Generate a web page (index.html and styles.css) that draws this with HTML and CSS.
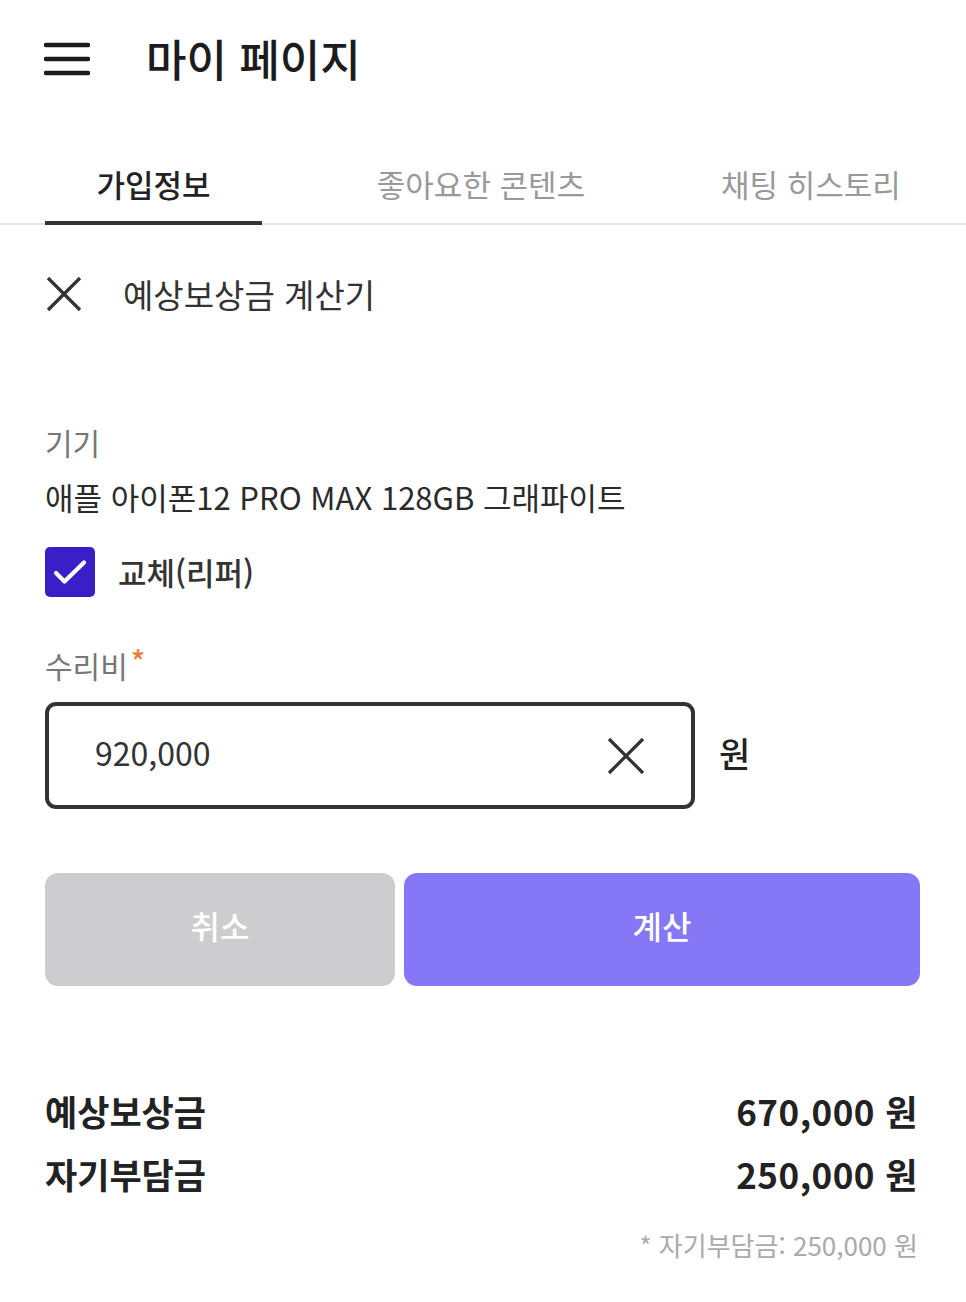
FILE: index.html
```html
<!DOCTYPE html>
<html lang="ko">
<head>
  <meta charset="UTF-8">
  <meta name="viewport" content="width=device-width, initial-scale=1.0">
  <title>마이 페이지</title>
  <link rel="stylesheet" href="styles.css">
</head>
<body>
  <!-- 상단 헤더 -->
  <header class="top-bar">
    <button class="menu-btn" aria-label="메뉴">
      <svg width="46" height="34" viewBox="0 0 46 34">
        <path d="M2 3h42M2 17h42M2 31h42" stroke="#1c1c1e" stroke-width="4.5" stroke-linecap="round" fill="none"/>
      </svg>
    </button>
    <h1 class="page-title">마이 페이지</h1>
  </header>

  <!-- 탭 -->
  <nav class="tabs">
    <a class="tab active" href="#">가입정보</a>
    <a class="tab wide" href="#">좋아요한 콘텐츠</a>
    <a class="tab last" href="#">채팅 히스토리</a>
  </nav>

  <main class="calc">
    <div class="calc-head">
      <button class="close-btn" aria-label="닫기">
        <svg width="38" height="38" viewBox="0 0 38 38">
          <path d="M3 3l32 32M35 3L3 35" stroke="#333" stroke-width="3.2" fill="none"/>
        </svg>
      </button>
      <h2 class="calc-title">예상보상금 계산기</h2>
    </div>

    <div class="field-label">기기</div>
    <div class="device">애플 아이폰12 PRO MAX 128GB 그래파이트</div>

    <label class="check-row">
      <span class="checkbox">
        <svg width="50" height="50" viewBox="0 0 50 50">
          <path d="M11 26l8.5 8.5L39 15.5" stroke="#fff" stroke-width="4.2" stroke-linecap="round" stroke-linejoin="round" fill="none"/>
        </svg>
      </span>
      <span class="check-text">교체(리퍼)</span>
    </label>

    <div class="field-label required">수리비<span class="star">*</span></div>
    <div class="input-row">
      <div class="input-box">
        <span class="input-value">920,000</span>
        <button class="clear-btn" aria-label="지우기">
          <svg width="38" height="38" viewBox="0 0 38 38">
            <path d="M2 2l34 34M36 2L2 36" stroke="#333" stroke-width="3.2" fill="none"/>
          </svg>
        </button>
      </div>
      <span class="unit">원</span>
    </div>

    <div class="actions">
      <button class="btn cancel">취소</button>
      <button class="btn submit">계산</button>
    </div>

    <div class="result">
      <div class="result-row"><span>예상보상금</span><span class="amount">670,000 원</span></div>
      <div class="result-row"><span>자기부담금</span><span class="amount">250,000 원</span></div>
      <p class="note">* 자기부담금: 250,000 원</p>
    </div>
  </main>
</body>
</html>
```

FILE: styles.css
```css
/* ---------- 기본 ---------- */
* { margin: 0; padding: 0; box-sizing: border-box; }
body {
  font-family: "Noto Sans CJK KR", "Noto Sans", sans-serif;
  background: #fff;
  color: #333;
}
button { border: none; background: none; font-family: inherit; cursor: pointer; }

/* ---------- 헤더 ---------- */
.top-bar {
  height: 116px;
  display: flex; align-items: center;
  padding-left: 44px;
}
.menu-btn { display: flex; width: 46px; height: 34px; margin-top: 2px; }
.page-title {
  margin-left: 56px;
  font-size: 44px; font-weight: 500; color: #1c1c1e;
  line-height: 50px;
}

/* ---------- 탭 ---------- */
.tabs {
  display: flex;
  padding: 48px 44px 0 45px;
  border-bottom: 2px solid #e4e4e4;
}
.tab {
  display: block;
  text-align: center; text-decoration: none;
  font-size: 31px; line-height: 40px; color: #999;
  padding-bottom: 17px;
  margin-bottom: -2px;
  border-bottom: 4px solid transparent;
}
.tab.active { width: 217px; color: #222; font-weight: 500; border-bottom-color: #333; }
.tab.wide { flex: 1; }
.tab.last { width: 222px; }

/* ---------- 계산기 ---------- */
.calc { padding: 0 46px 0 45px; }
.calc-head {
  display: flex; align-items: center;
  height: 40px; margin-top: 49px;
}
.close-btn { display: flex; width: 38px; height: 38px; }
.calc-title {
  margin-left: 40px;
  font-size: 33px; font-weight: 400; color: #333; line-height: 40px;
}

.field-label {
  margin-top: 108px;
  font-size: 30px; line-height: 40px; color: #777;
}
.device {
  margin-top: 15px;
  font-size: 31px; line-height: 40px; color: #2b2b2b;
}

.check-row { display: flex; align-items: center; margin-top: 30px; }
.checkbox {
  width: 50px; height: 50px; border-radius: 5px;
  background: #3a1ec8;
  display: flex;
}
.check-text { margin-left: 23px; font-size: 31px; line-height: 40px; color: #333; font-weight: 500; }

.field-label.required { margin-top: 48px; }
.star { color: #e8813b; font-size: 30px; font-weight: 500; position: relative; top: -5px; margin-left: 3px; }

.input-row { display: flex; align-items: center; margin-top: 17px; }
.input-box {
  width: 650px; height: 107px;
  border: 4px solid #333; border-radius: 11px;
  display: flex; align-items: center; justify-content: space-between;
  padding: 0 46px 0 46px;
}
.input-value { font-size: 32px; color: #333; line-height: 40px; margin-top: -8px; }
.clear-btn { display: flex; width: 38px; height: 38px; }
.unit { margin-left: 24px; font-size: 34px; font-weight: 500; color: #222; margin-top: -6px; }

.actions { display: flex; gap: 9px; margin-top: 64px; }
.btn {
  height: 113px; border-radius: 13px;
  padding-bottom: 10px;
  color: #fff; font-size: 32px; font-weight: 500;
}
.btn.cancel { width: 350px; background: #cdcdcf; }
.btn.submit { flex: 1; background: #8577f6; }

/* ---------- 결과 ---------- */
.result { margin-top: 103px; padding-right: 2px; }
.result-row {
  display: flex; justify-content: space-between;
  font-size: 35px; font-weight: 700; color: #222; line-height: 44px;
}
.result-row + .result-row { margin-top: 19px; }
.amount { letter-spacing: 0.5px; }
.note {
  margin-top: 31px;
  text-align: right;
  font-size: 26px; line-height: 36px; color: #aaa;
}
```
